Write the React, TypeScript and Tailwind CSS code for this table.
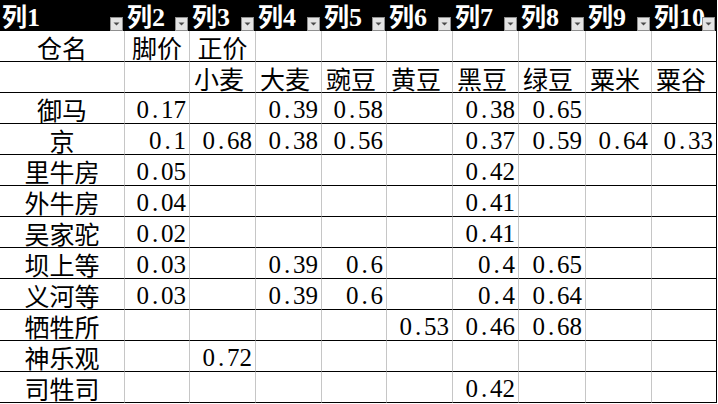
import React from "react";

type Row = { name: string; vals: (string | null)[] };

const rows: Row[] = [
  { name: "御马", vals: ["0.17", null, "0.39", "0.58", null, "0.38", "0.65", null, null] },
  { name: "京", vals: ["0.1", "0.68", "0.38", "0.56", null, "0.37", "0.59", "0.64", "0.33"] },
  { name: "里牛房", vals: ["0.05", null, null, null, null, "0.42", null, null, null] },
  { name: "外牛房", vals: ["0.04", null, null, null, null, "0.41", null, null, null] },
  { name: "吴家驼", vals: ["0.02", null, null, null, null, "0.41", null, null, null] },
  { name: "坝上等", vals: ["0.03", null, "0.39", "0.6", null, "0.4", "0.65", null, null] },
  { name: "义河等", vals: ["0.03", null, "0.39", "0.6", null, "0.4", "0.64", null, null] },
  { name: "牺牲所", vals: [null, null, null, null, "0.53", "0.46", "0.68", null, null] },
  { name: "神乐观", vals: [null, "0.72", null, null, null, null, null, null, null] },
  { name: "司牲司", vals: [null, null, null, null, null, "0.42", null, null, null] },
];

const serif = "[font-family:'Liberation_Serif','Noto_Sans_CJK_SC',serif]";
const cjk = "[font-family:'Noto_Sans_CJK_SC',sans-serif]";

function Num({ v }: { v: string }) {
  const [a, b] = v.split(".");
  return (
    <span className={`${serif} text-[25px] leading-none`}>
      {a}
      <span className="inline-block w-[12px] text-center">.</span>
      {b}
    </span>
  );
}

function Zh({ t }: { t: string }) {
  return <span className={`${cjk} text-[25px] leading-none`}>{t}</span>;
}

function Cell({
  children,
  last,
  align = "left",
}: {
  children?: React.ReactNode;
  last?: boolean;
  align?: "left" | "center" | "right";
}) {
  const al =
    align === "center"
      ? "justify-center"
      : align === "right"
      ? "justify-end pr-[3px]"
      : "justify-start pl-[4px]";
  return (
    <div
      className={`h-[31px] border-b border-r border-b-black ${
        last ? "border-r-black" : "border-r-[#c6c6c6]"
      } flex items-end pb-[1px] leading-none whitespace-nowrap overflow-hidden text-black ${al}`}
    >
      {children}
    </div>
  );
}

function FilterBtn() {
  return (
    <div className="absolute right-[2px] bottom-0 w-[13px] h-[14px] bg-[#e4e4e4] border border-[#8f8f8f] flex items-center justify-center">
      <svg width="7" height="4" viewBox="0 0 7 4">
        <path d="M0.5 0.5 L6.5 0.5 L3.5 3.5 Z" fill="#4a4a4a" />
      </svg>
    </div>
  );
}

export default function App() {
  const headers = ["1", "2", "3", "4", "5", "6", "7", "8", "9", "10"];
  const row2 = ["", "", "小麦", "大麦", "豌豆", "黄豆", "黑豆", "绿豆", "粟米", "粟谷"];
  return (
    <div className={`w-[718px] h-[404px] bg-white overflow-hidden ${serif}`}>
      <div className="grid grid-cols-[125px_65px_66px_66px_65px_66px_66px_67px_66px_65px] w-[717px]">
        {headers.map((h) => (
          <div
            key={h}
            className="relative h-[31px] bg-black text-white font-bold pl-[2px] flex items-end leading-none whitespace-nowrap overflow-hidden"
          >
            <span className="leading-none">
              <span className={`${cjk} text-[25px] leading-none`}>列</span>
              <span className={`${serif} text-[26px] leading-none`}>{h}</span>
            </span>
            <FilterBtn />
          </div>
        ))}

        {/* row 1 */}
        <Cell align="center">
          <Zh t="仓名" />
        </Cell>
        <Cell align="center">
          <Zh t="脚价" />
        </Cell>
        <Cell align="center">
          <Zh t="正价" />
        </Cell>
        {Array.from({ length: 7 }).map((_, i) => (
          <Cell key={i} last={i === 6} />
        ))}

        {/* row 2 */}
        {row2.map((t, i) => (
          <Cell key={i} last={i === 9}>
            {t ? <Zh t={t} /> : null}
          </Cell>
        ))}

        {rows.map((r) => (
          <React.Fragment key={r.name}>
            <Cell align="center">
              <Zh t={r.name} />
            </Cell>
            {r.vals.map((v, i) => (
              <Cell key={i} align="right" last={i === 8}>
                {v ? <Num v={v} /> : null}
              </Cell>
            ))}
          </React.Fragment>
        ))}
      </div>
    </div>
  );
}
